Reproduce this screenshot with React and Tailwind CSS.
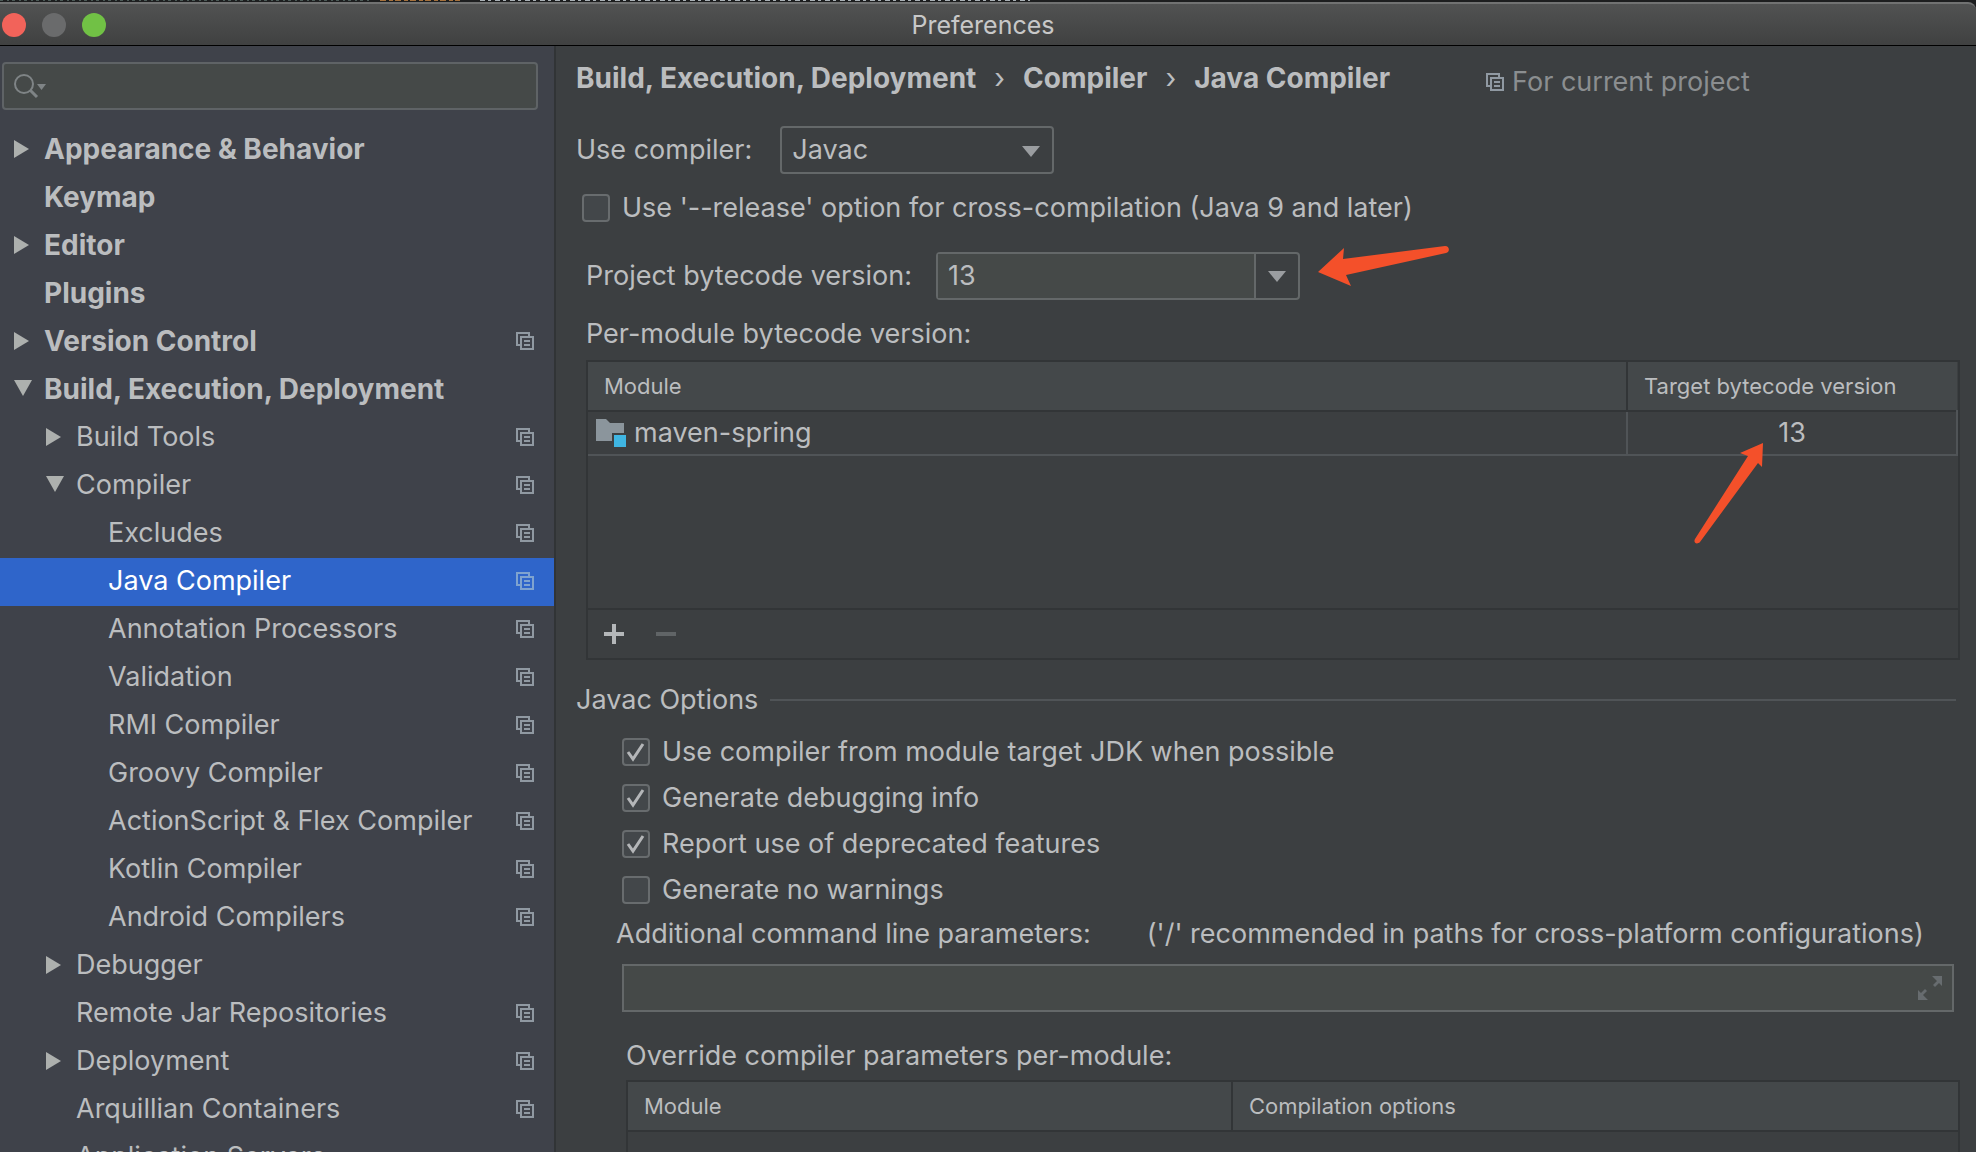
const tree = [
  { label: "Appearance & Behavior", level: 0, arrow: "right" },
  { label: "Keymap", level: 0 },
  { label: "Editor", level: 0, arrow: "right" },
  { label: "Plugins", level: 0 },
  { label: "Version Control", level: 0, arrow: "right", project: true },
  { label: "Build, Execution, Deployment", level: 0, arrow: "down" },
  { label: "Build Tools", level: 1, arrow: "right", project: true },
  { label: "Compiler", level: 1, arrow: "down", project: true },
  { label: "Excludes", level: 2, project: true },
  { label: "Java Compiler", level: 2, project: true, selected: true },
  { label: "Annotation Processors", level: 2, project: true },
  { label: "Validation", level: 2, project: true },
  { label: "RMI Compiler", level: 2, project: true },
  { label: "Groovy Compiler", level: 2, project: true },
  { label: "ActionScript & Flex Compiler", level: 2, project: true },
  { label: "Kotlin Compiler", level: 2, project: true },
  { label: "Android Compilers", level: 2, project: true },
  { label: "Debugger", level: 1, arrow: "right" },
  { label: "Remote Jar Repositories", level: 1, project: true },
  { label: "Deployment", level: 1, arrow: "right", project: true },
  { label: "Arquillian Containers", level: 1, project: true },
  { label: "Application Servers", level: 1 },
];

const indents = ["pl-3", "pl-11", "pl-19"];

const javacOptions = [
  { label: "Use compiler from module target JDK when possible", checked: true },
  { label: "Generate debugging info", checked: true },
  { label: "Report use of deprecated features", checked: true },
  { label: "Generate no warnings", checked: false },
];

const ProjectIcon = ({ className = "text-[#9099a2]" }) => (
  <svg
    width="18"
    height="18"
    viewBox="0 0 18 18"
    fill="none"
    stroke="currentColor"
    strokeWidth="2"
    className={`shrink-0 ${className}`}
  >
    <path d="M4 13H1V1h12v3" />
    <path d="M5 5h12v12H5z" />
    <path d="M8 9h6M8 13h6" />
  </svg>
);

const TreeArrow = ({ direction }) => (
  <svg width="20" height="20" viewBox="0 0 20 20" fill="#adb0ae">
    {direction === "right" && <path d="M2 1v18l15-9z" />}
    {direction === "down" && <path d="M2 1h18l-9 16z" />}
  </svg>
);

const DropArrow = ({ className = "" }) => (
  <svg
    width="18"
    height="11"
    viewBox="0 0 18 11"
    fill="#9a9da0"
    className={`pointer-events-none ${className}`}
  >
    <path d="M0 0h18l-9 11z" />
  </svg>
);

const Checkbox = ({ label, checked }) => (
  <label className="flex items-center gap-3">
    <span className="relative flex size-7">
      <input
        type="checkbox"
        defaultChecked={checked}
        className="peer size-7 appearance-none rounded-sm border-2 border-[#686c6e] bg-[#43474a]"
      />
      <svg
        viewBox="0 0 28 28"
        fill="none"
        stroke="#b4b6b8"
        strokeWidth="3"
        className="pointer-events-none absolute inset-0 hidden peer-checked:block"
      >
        <path d="M6 14l5 7L21 6" />
      </svg>
    </span>
    {label}
  </label>
);

const TitleBar = () => (
  <header className="bg-[#1d1e1f]">
    {/* sliver of the editor window behind */}
    <svg width="100%" height="2" className="block" strokeWidth="1">
      <path d="M0 .5h370" stroke="#4c5a57" strokeDasharray="3 4 2 3" />
      <path d="M380 .5h80" stroke="#a5713c" strokeDasharray="6 3 4 2" />
      <path d="M480 .5h550" stroke="#a9b0b5" strokeDasharray="5 3 3 4" />
    </svg>
    <div className="grid h-11 grid-cols-3 items-center rounded-tr-lg border-t-2 border-b border-t-[#717272] border-b-black bg-linear-to-b from-[#515252] to-[#404141] pr-3 pl-0.5">
      <div className="flex gap-4">
        <button aria-label="Close" className="size-6 rounded-full bg-[#f2635a]" />
        <button aria-label="Minimize" className="size-6 rounded-full bg-[#6a6b6c]" />
        <button aria-label="Zoom" className="size-6 rounded-full bg-[#71c145]" />
      </div>
      <h1 className="text-center text-[25px] text-[#c8c8c8]">Preferences</h1>
    </div>
  </header>
);

const Sidebar = () => (
  <aside className="w-[556px] shrink-0 overflow-hidden border-r-2 border-[#313436] bg-[#3f424a]">
    <div className="relative mt-4 mr-4 mb-4 ml-0.5">
      <input
        type="search"
        aria-label="Search settings"
        className="block h-12 w-full rounded border-2 border-[#5f6366] bg-[#454948] pl-12 outline-none"
      />
      <svg
        width="34"
        height="26"
        viewBox="0 0 34 26"
        fill="none"
        stroke="#7f8486"
        strokeWidth="2"
        className="absolute top-3 left-2.5"
      >
        <circle cx="12" cy="10" r="9" />
        <path d="M18 16l7 7" strokeWidth="3" />
        <path d="M25 10h9l-4.500 6z" fill="#7f8486" stroke="none" />
      </svg>
    </div>
    <ul>
      {tree.map((item) => (
        <li key={item.label}>
          <a
            href="#"
            className={`flex h-12 items-center gap-3 pr-5 pb-0.5 ${indents[item.level]} ${
              item.level === 0 ? "text-[28px] font-bold" : ""
            } ${item.selected ? "bg-[#2f65ca] text-white" : ""}`}
          >
            <TreeArrow direction={item.arrow} />
            <span className="grow whitespace-nowrap">{item.label}</span>
            {item.project && (
              <ProjectIcon
                className={item.selected ? "text-[#7fa3cf]" : "text-[#9099a2]"}
              />
            )}
          </a>
        </li>
      ))}
    </ul>
  </aside>
);

const Breadcrumbs = () => (
  <div className="flex items-center pt-3">
    <nav className="flex items-center gap-4.5 text-[28px] font-bold">
      <a href="#">Build, Execution, Deployment</a>
      <span className="font-normal">›</span>
      <a href="#">Compiler</a>
      <span className="font-normal">›</span>
      <a href="#">Java Compiler</a>
    </nav>
    <p className="ml-24 flex items-center gap-2 pt-2 text-[#8b8e90]">
      <ProjectIcon />
      For current project
    </p>
  </div>
);

const ModuleTable = () => (
  <div className="relative mt-2.5 ml-2.5 border-2 border-[#323537]">
    <table className="w-full table-fixed border-collapse">
      <thead className="bg-[#44484a] text-left text-[22px]">
        <tr className="h-[49px] border-b-2 border-[#323537]">
          <th className="border-r-2 border-[#323537] pl-4 font-normal">Module</th>
          <th className="w-[330px] pl-4 font-normal">Target bytecode version</th>
        </tr>
      </thead>
      <tbody>
        <tr className="h-11 border-b-2 border-[#505457]">
          <td className="border-r-2 border-[#505457] pl-2">
            <span className="flex items-center gap-2">
              <svg width="30" height="28" viewBox="0 0 30 28">
                <path d="M0 0h10l4 4h14v10H16v8H0z" fill="#8b959c" />
                <path d="M18 16h12v12H18z" fill="#3fb6e3" />
              </svg>
              maven-spring
            </span>
          </td>
          <td className="border-r-2 border-[#505457] text-center">13</td>
        </tr>
      </tbody>
    </table>
    <div className="h-38" />
    <div className="flex h-[50px] items-center gap-8 border-t-2 border-[#323537] px-4">
      <button aria-label="Add">
        <svg width="20" height="20" viewBox="0 0 20 20" fill="#b4b7b9">
          <path d="M8 0h4v8h8v4h-8v8H8v-8H0V8h8z" />
        </svg>
      </button>
      <button aria-label="Remove" disabled>
        <svg width="20" height="20" viewBox="0 0 20 20" fill="#606466">
          <path d="M0 8h20v4H0z" />
        </svg>
      </button>
    </div>
    <svg
      width="70"
      height="104"
      viewBox="0 0 70 104"
      fill="#f4502a"
      className="pointer-events-none absolute top-20 right-[194px]"
    >
      <path d="M69 1L46 11l8 3L1 97c-2 4 2 6 5 3L64 21l4 4z" />
    </svg>
  </div>
);

const CompilerPage = () => (
  <main className="min-w-0 grow px-5 pr-4">
    <Breadcrumbs />

    <div className="mt-7 flex items-center gap-7">
      <label htmlFor="compiler">Use compiler:</label>
      <div className="relative">
        <select
          id="compiler"
          className="block h-12 w-[274px] appearance-none rounded border-2 border-[#646869] px-2.5"
        >
          <option>Javac</option>
        </select>
        <DropArrow className="absolute top-5 right-3.5" />
      </div>
    </div>

    <div className="mt-4.5 pl-1.5">
      <Checkbox label="Use '--release' option for cross-compilation (Java 9 and later)" />
    </div>

    <div className="mt-7 ml-2.5 flex items-center gap-6">
      <label htmlFor="bytecode">Project bytecode version:</label>
      <div className="relative flex h-12 w-[364px] rounded border-2 border-[#646869]">
        <input
          id="bytecode"
          type="text"
          defaultValue="13"
          className="min-w-0 grow bg-[#454948] pl-2.5 outline-none"
        />
        <button
          aria-label="Show versions"
          className="flex w-11 shrink-0 items-center justify-center border-l-2 border-[#646869]"
        >
          <DropArrow />
        </button>
        <svg
          width="132"
          height="40"
          viewBox="0 0 132 40"
          fill="#f4502a"
          className="pointer-events-none absolute -top-2 left-[380px]"
        >
          <path d="M0 26L26 2l-1 11L127 0c5 0 5 6 1 7L28 29l5 11z" />
        </svg>
      </div>
    </div>

    <p className="mt-4.5 ml-2.5">Per-module bytecode version:</p>
    <ModuleTable />

    <section>
      <div className="mt-6 flex items-center gap-3">
        <h2>Javac Options</h2>
        <hr className="mr-1 grow border-t-2 border-[#505457]" />
      </div>
      <div className="mt-5 ml-[46px] flex flex-col gap-3.5">
        {javacOptions.map((option) => (
          <Checkbox key={option.label} {...option} />
        ))}
      </div>
      <div className="mt-3 ml-10 flex gap-14">
        <label htmlFor="params">Additional command line parameters:</label>
        <span>('/' recommended in paths for cross-platform configurations)</span>
      </div>
      <div className="relative mt-3.5 mr-1.5 ml-[46px]">
        <input
          id="params"
          type="text"
          className="block h-12 w-full border-2 border-[#646869] bg-[#454948] px-3 outline-none"
        />
        <button aria-label="Expand" className="absolute top-3 right-3">
          <svg width="24" height="24" viewBox="0 0 24 24" fill="#676c6f">
            <path d="M14 0h10v10l-3-3-4 4-2-2 4-4zM0 14l3 3 4-4 2 2-4 4 5 5H0z" />
          </svg>
        </button>
      </div>
      <p className="mt-7 ml-[50px]">Override compiler parameters per-module:</p>
      <div className="mt-2 ml-[50px] border-2 border-[#323537]">
        <table className="w-full table-fixed border-collapse">
          <thead className="bg-[#44484a] text-left text-[22px]">
            <tr className="h-[49px] border-b-2 border-[#323537]">
              <th className="w-[604px] border-r-2 border-[#323537] pl-4 font-normal">
                Module
              </th>
              <th className="pl-4 font-normal">Compilation options</th>
            </tr>
          </thead>
        </table>
        <div className="h-48" />
      </div>
    </section>
  </main>
);

const App = () => {
  return (
    <div className="flex h-screen flex-col overflow-hidden bg-[#3c3f41] font-[Inter,sans-serif] text-[27px] leading-8 text-[#bbbdbf]">
      <TitleBar />
      <div className="flex min-h-0 grow">
        <Sidebar />
        <CompilerPage />
      </div>
    </div>
  );
};

export default App;
